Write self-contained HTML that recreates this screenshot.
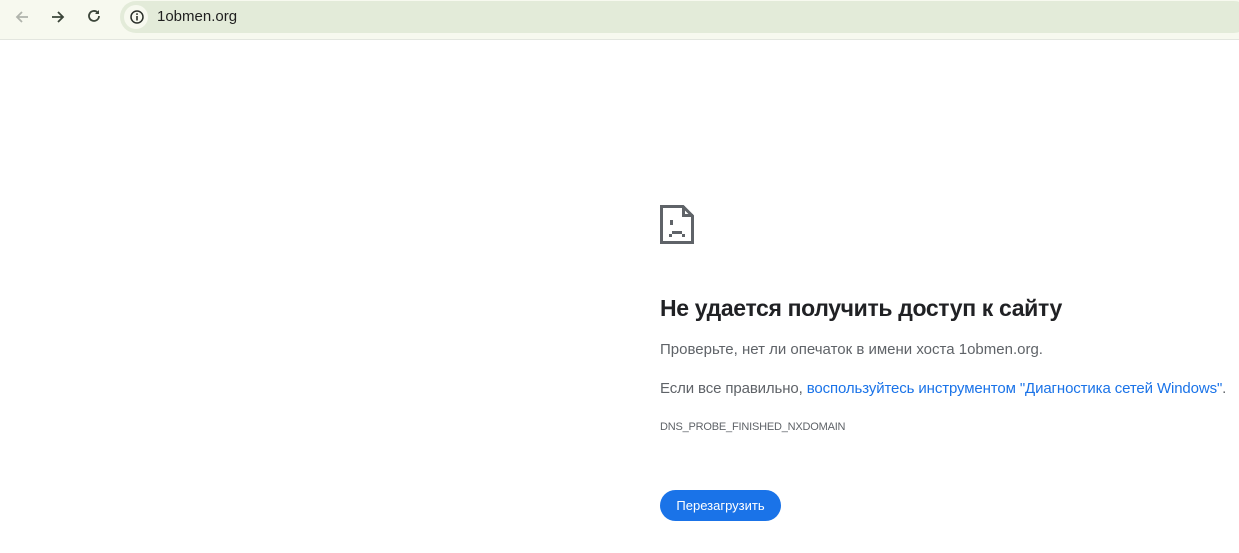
<!DOCTYPE html>
<html><head><meta charset="utf-8"><style>
body{margin:0;width:1239px;height:553px;background:#fff;font-family:"Liberation Sans",sans-serif;position:relative;overflow:hidden}
.bar{position:absolute;left:0;top:0;width:1239px;height:39px;background:#f7f9ef;border-bottom:1px solid #e3e6df}
.omni{position:absolute;left:120px;top:1px;width:1130px;height:32px;background:#e3ebd9;border-radius:16px}
.t{position:absolute;white-space:nowrap}
</style></head><body>
<div class="bar">
<svg class="t" style="left:13px;top:8px" width="18" height="18" viewBox="0 0 18 18"><path d="M15 9H4M9 4L4 9l5 5" stroke="#b0b4ac" stroke-width="1.8" fill="none"/></svg>
<svg class="t" style="left:49px;top:8px" width="18" height="18" viewBox="0 0 18 18"><path d="M3 9h11M9 4l5 5-5 5" stroke="#3b4539" stroke-width="1.8" fill="none"/></svg>
<svg class="t" style="left:85px;top:7px" width="18" height="18" viewBox="0 0 18 18"><path d="M14 9a5 5 0 1 1-1.5-3.6" stroke="#3b4539" stroke-width="1.8" fill="none"/><path d="M14 3v4h-4z" fill="#3b4539"/></svg>
<div class="omni"></div>
<div class="t" style="left:124px;top:5px;width:24px;height:24px;border-radius:12px;background:#f7f9ef"></div>
<svg class="t" style="left:129px;top:9px" width="16" height="16" viewBox="0 0 16 16"><circle cx="8" cy="8" r="6" stroke="#2b302a" stroke-width="1.5" fill="none"/><rect x="7.2" y="7" width="1.6" height="4.5" fill="#2b302a"/><rect x="7.2" y="4.3" width="1.6" height="1.6" fill="#2b302a"/></svg>
<div class="t" style="left:157px;top:8px;font-size:15px;color:#1f1f1f">1obmen.org</div>
</div>
<svg class="t" style="left:660px;top:205px" width="34" height="40" viewBox="0 0 34 40">
<path d="M1.5 1.5H23L32.5 11V37.5H1.5Z" stroke="#5f6368" stroke-width="3" fill="none"/>
<rect x="22" y="1" width="3" height="11" fill="#5f6368"/><rect x="22" y="9" width="11" height="3" fill="#5f6368"/>
<rect x="10" y="15" width="3" height="5" fill="#5f6368"/>
<rect x="9" y="29" width="3" height="3" fill="#5f6368"/><rect x="12" y="26" width="10" height="3" fill="#5f6368"/><rect x="22" y="29" width="3" height="3" fill="#5f6368"/>
</svg>
<div class="t" style="left:660px;top:295px;font-size:23px;font-weight:bold;color:#202124;letter-spacing:-0.35px">Не удается получить доступ к сайту</div>
<div class="t" style="left:660px;top:341px;font-size:15px;color:#5f6368">Проверьте, нет ли опечаток в имени хоста 1obmen.org.</div>
<div class="t" style="left:660px;top:380px;font-size:15px;color:#5f6368;letter-spacing:-0.12px">Если все правильно, <span style="color:#1a73e8">воспользуйтесь инструментом "Диагностика сетей Windows"</span>.</div>
<div class="t" style="left:660px;top:421px;font-size:11px;color:#5f6368;letter-spacing:-0.2px">DNS_PROBE_FINISHED_NXDOMAIN</div>
<div class="t" style="left:660px;top:490px;width:121px;height:31px;border-radius:16px;background:#1a73e8;color:#fff;font-size:13px;line-height:31px;text-align:center">Перезагрузить</div>
</body></html>
